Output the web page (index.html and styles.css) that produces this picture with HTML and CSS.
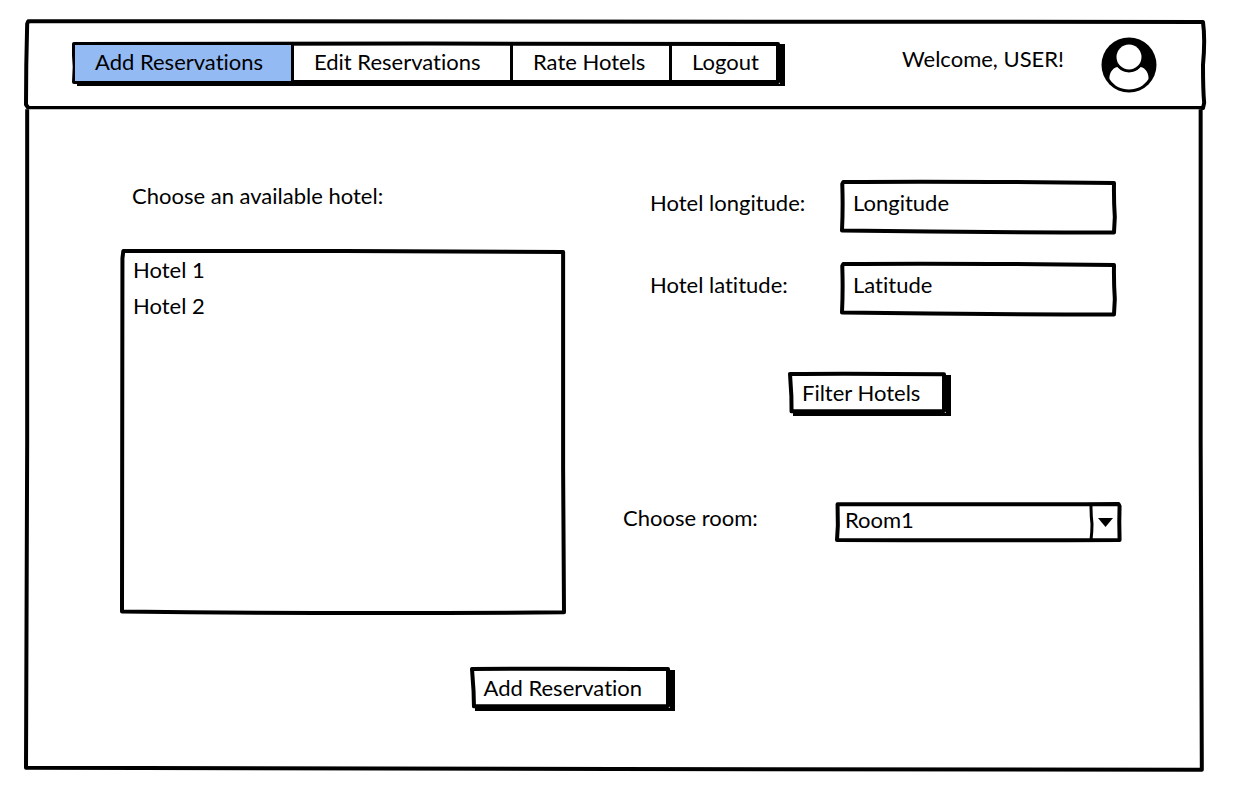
FILE: index.html
```html
<!DOCTYPE html>
<html lang="en">
<head>
<meta charset="utf-8">
<meta name="viewport" content="width=device-width, initial-scale=1">
<title>Add Reservations</title>
<link rel="stylesheet" href="styles.css">
</head>
<body>
<div class="page">
  <header class="header">
    <svg class="sketch" viewBox="0 0 100 100" preserveAspectRatio="none" aria-hidden="true"><path d="M.2 -1 Q50 -1 100 0 Q100.200 20 100 50 Q100 80 100.100 94 L100 100 L50 100 L.2 100 L0 96 Q0 50 .1 2 Z"/></svg>
    <nav class="nav">
      <svg class="sketch" viewBox="0 0 100 100" preserveAspectRatio="none" aria-hidden="true"><path d="M0 0 L50 -1 L100 0 L100 100 L0 100 L.1 60 L0 30 Z"/></svg>
      <a class="tab tab-active" href="#add" aria-current="page">Add Reservations</a>
      <a class="tab" href="#edit">Edit Reservations</a>
      <a class="tab" href="#rate">Rate Hotels</a>
      <a class="tab" href="#logout">Logout</a>
    </nav>
    <div class="user">
      <span class="welcome">Welcome, USER!</span>
      <svg class="avatar" viewBox="0 0 56 56" role="img" aria-label="User profile"><circle cx="28" cy="28" r="27.5"/><path class="paper" d="M16.500 30 C11 31 8 37 8.500 42 C13 49 20 52.500 28 52.500 C36 52.500 43 49 47.500 42 C48 37 45 31 39.500 30 Q28 40 16.500 30 Z"/><circle cx="28" cy="20.500" r="15"/><circle class="paper" cx="28" cy="20" r="12.500"/></svg>
    </div>
  </header>

  <main class="main">
    <svg class="sketch" viewBox="0 0 100 100" preserveAspectRatio="none" aria-hidden="true"><path d="M.1 -.4 L.1 50 L0 99.800 L50 100 L99.900 100.100 L99.800 50 L99.800 -.4"/></svg>
    <form class="form">
      <div class="columns">
        <section class="hotels">
          <label class="hotels-label" for="hotels">Choose an available hotel:</label>
          <div class="frame">
            <svg class="sketch" viewBox="0 0 100 100" preserveAspectRatio="none" aria-hidden="true"><path d="M.3 0 L50 0 L99.800 .3 Q99.700 40 99.800 60 Q99.900 80 100 99.800 Q50 100.300 0 99.600 Q.2 50 .1 2 Z"/></svg>
            <select class="list" id="hotels" size="9">
              <option>Hotel 1</option>
              <option>Hotel 2</option>
            </select>
          </div>
        </section>
        <section class="details">
          <div class="filters">
            <div class="row">
              <label for="longitude">Hotel longitude:</label>
              <div class="frame">
                <svg class="sketch" viewBox="0 0 100 100" preserveAspectRatio="none" aria-hidden="true"><path d="M.5 0 Q40 -2 100 2 Q99.900 40 100.300 70 L100 101 Q50 101 0 97 Q.4 50 .1 4 Z"/></svg>
                <input class="field" id="longitude" type="text" placeholder="Longitude">
              </div>
            </div>
            <div class="row">
              <label for="latitude">Hotel latitude:</label>
              <div class="frame">
                <svg class="sketch" viewBox="0 0 100 100" preserveAspectRatio="none" aria-hidden="true"><path d="M.5 0 Q40 -2 100 2 Q99.900 40 100.300 70 L100 101 Q50 101 0 97 Q.4 50 .1 4 Z"/></svg>
                <input class="field" id="latitude" type="text" placeholder="Latitude">
              </div>
            </div>
          </div>
          <button class="button filter" type="button">
            <svg class="sketch" viewBox="0 0 100 100" preserveAspectRatio="none" aria-hidden="true"><path d="M0 0 Q40 -2 100 1 L100 100 L1 101 L.9 60 Z"/></svg>
            <span class="caption">Filter Hotels</span>
          </button>
          <div class="room">
            <label for="room">Choose room:</label>
            <div class="frame">
              <svg class="sketch" viewBox="0 0 100 100" preserveAspectRatio="none" aria-hidden="true"><path d="M.2 1 Q50 0 88 1 L99.800 0 L100.200 6 L100.100 50 L100.200 100 Q50 102 0 100 L.3 60 Z"/></svg>
              <select class="room-select" id="room"><option>Room1</option></select>
              <svg class="arrow" viewBox="0 0 34 40" aria-hidden="true"><path class="divider" d="M4 3 Q4 14 5 22 Q5 30 4 38"/><path d="M11 16 L26 16 L18.500 25 Z"/></svg>
            </div>
          </div>
        </section>
      </div>
      <button class="button submit" type="submit">
        <svg class="sketch" viewBox="0 0 100 100" preserveAspectRatio="none" aria-hidden="true"><path d="M0 0 Q40 -2 100 0 L100 100 L1 101 L.8 60 Z"/></svg>
        <span class="caption">Add Reservation</span>
      </button>
    </form>
  </main>
</div>
</body>
</html>
```
FILE: styles.css
```css
* {
  box-sizing: border-box;
}

body {
  margin: 0;
  background: #fff;
  color: #000;
  font-family: Lato, "Open Sans", sans-serif;
  font-size: 22px;
  font-variant-ligatures: none;
  line-height: 28px;
}

button,
input,
select {
  margin: 0;
  border: 0;
  border-radius: 0;
  background: transparent;
  color: #000;
  font: inherit;
  font-variant-ligatures: none;
}

a {
  color: inherit;
  text-decoration: none;
}

.page {
  display: flex;
  flex-direction: column;
  min-height: 100vh;
  padding: 20px 31px 26px 24px;
}

/* Hand-drawn outline, stretched behind the box that holds it */
.sketch {
  position: absolute;
  inset: 2px;
  z-index: -1;
  width: calc(100% - 4px);
  height: calc(100% - 4px);
  overflow: visible;
  pointer-events: none;
}

.sketch path {
  fill: #fff;
  stroke: #000;
  stroke-width: 4px;
  stroke-linejoin: round;
  vector-effect: non-scaling-stroke;
}

.header,
.main,
.nav,
.frame,
.button {
  position: relative;
  isolation: isolate;
}

.header {
  display: flex;
  align-items: flex-start;
  justify-content: space-between;
  padding: 17px 48px;
}

.nav {
  display: grid;
  grid-template-columns: 216fr 219fr 159fr 108fr;
  flex: 0 1 708px;
  margin-top: 5px;
  padding: 3px;
  box-shadow: 5px 2px 0 #000;
}

.tab {
  padding: 3px 0 5px 20px;
  white-space: nowrap;
}

.tab + .tab {
  border-left: 3px solid #000;
}

.tab-active {
  background: #94baf3;
}

.user {
  display: flex;
  align-items: flex-start;
  gap: 37px;
}

.welcome {
  padding-top: 8px;
}

.avatar {
  width: 56px;
  height: 56px;
}

.paper {
  fill: #fff;
}

.main {
  flex: 1;
  padding: 70px 84px 56px 96px;
}

.form {
  display: flex;
  flex-direction: column;
  align-items: center;
  gap: 52px;
}

.columns {
  display: grid;
  grid-template-columns: 446fr 498fr;
  gap: 57px;
  width: 100%;
}

.hotels {
  display: flex;
  flex-direction: column;
  gap: 39px;
  padding-top: 2px;
}

.hotels-label {
  padding-left: 12px;
}

.list {
  display: block;
  width: 100%;
  height: 366px;
  padding: 3px;
  outline: 0;
}

.list option {
  min-height: 36px;
  padding: 4px 10px;
}

.details {
  display: flex;
  flex-direction: column;
}

.filters {
  display: grid;
  gap: 28px;
  padding: 0 5px 0 27px;
}

.row {
  display: grid;
  grid-template-columns: 190fr 276fr;
  align-items: start;
}

.row label {
  padding-top: 9px;
}

.field {
  display: block;
  width: 100%;
  height: 54px;
  padding: 2px 13px 12px;
}

.field::placeholder {
  color: #000;
  opacity: 1;
}

.button {
  padding: 7px 14px 6px;
  box-shadow: 5px 3px 0 #000;
  text-align: left;
}

.filter {
  align-self: flex-start;
  width: 158px;
  margin: 56px 0 89px 165px;
}

.submit {
  width: 200px;
  margin-right: 102px;
}

.room {
  display: grid;
  grid-template-columns: 212fr 286fr;
  align-items: start;
}

.room label {
  padding-top: 2px;
}

.room-select {
  display: block;
  width: 100%;
  height: 40px;
  padding: 0 40px 4px 10px;
  appearance: none;
}

.arrow {
  position: absolute;
  top: 0;
  right: 0;
  width: 34px;
  height: 40px;
  pointer-events: none;
}

.divider {
  fill: none;
  stroke: #000;
  stroke-width: 3px;
}
```
